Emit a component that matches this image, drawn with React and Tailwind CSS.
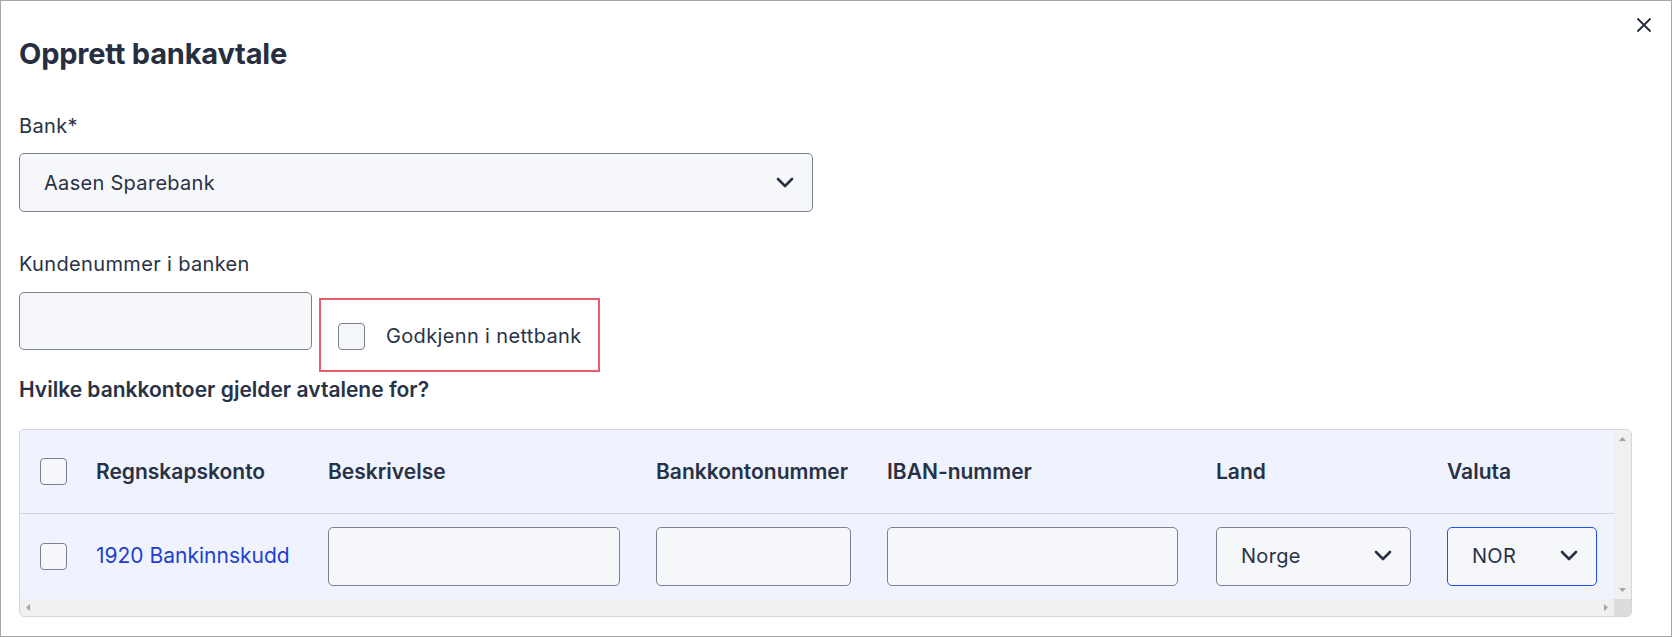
import React from 'react';

const Chevron = () => (
  <svg width="18" height="12" viewBox="0 0 18 12" fill="none" className="shrink-0">
    <path d="M2 2 L9 9 L16 2" stroke="#273142" strokeWidth="2.6" strokeLinecap="round" strokeLinejoin="round" />
  </svg>
);

const Box = () => (
  <div className="w-[27px] h-[27px] rounded-[4px] border border-[#7b8190] bg-[#f6f7fb] shrink-0" />
);

const Field = ({ w, focus }) => (
  <div className={`h-[59px] rounded-[5px] border bg-[#f6f7fb] ${focus ? 'border-[#2152f0]' : 'border-[#7b8190]'} ${w}`} />
);

const SelectBox = ({ value, w, focus }) => (
  <div className={`h-[59px] rounded-[5px] border bg-[#f6f7fb] flex items-center justify-between pl-[24px] pr-[18px] ${focus ? 'border-[#2152f0]' : 'border-[#7b8190]'} ${w}`}>
    <span className="text-[20px] leading-[24px] tracking-[0.3px]">{value}</span>
    <Chevron />
  </div>
);

const Arrow = ({ dir }) => {
  const d = {
    up: 'M0 4 L3.5 0 L7 4 Z',
    down: 'M0 0 L3.5 4 L7 0 Z',
    left: 'M4 0 L0 3.5 L4 7 Z',
    right: 'M0 0 L4 3.5 L0 7 Z',
  }[dir];
  const vert = dir === 'up' || dir === 'down';
  return (
    <svg width={vert ? 7 : 4} height={vert ? 4 : 7} viewBox={vert ? '0 0 7 4' : '0 0 4 7'}>
      <path d={d} fill="#a3a3a3" />
    </svg>
  );
};

const columns = [
  { key: 'check', w: 'w-[56px]' },
  { key: 'konto', w: 'w-[232px]', label: 'Regnskapskonto' },
  { key: 'beskr', w: 'w-[328px]', label: 'Beskrivelse' },
  { key: 'bankkonto', w: 'w-[231px]', label: 'Bankkontonummer' },
  { key: 'iban', w: 'w-[329px]', label: 'IBAN-nummer' },
  { key: 'land', w: 'w-[231px]', label: 'Land' },
  { key: 'valuta', w: 'w-[160px]', label: 'Valuta' },
];

export default function App() {
  return (
    <div className="relative w-[1672px] h-[637px] overflow-hidden border border-[#a6a6a6] bg-white pl-[18px] pt-[35px] font-[Inter,'Noto_Sans',sans-serif] text-[#283246]">
      <button className="absolute right-[18px] top-[15px] p-[1px]" title="Lukk">
        <svg width="16" height="16" viewBox="0 0 16 16" fill="none">
          <path d="M2 2 L14 14 M14 2 L2 14" stroke="#273142" strokeWidth="1.9" strokeLinecap="round" />
        </svg>
      </button>

      <h1 className="text-[29px] leading-[36px] font-bold text-[#262e3f] tracking-[-0.2px]">Opprett bankavtale</h1>

      <div className="mt-[42px] text-[20px] leading-[24px] tracking-[0.35px]">Bank*</div>
      <div className="mt-[15px]">
        <SelectBox value="Aasen Sparebank" w="w-[794px]" />
      </div>

      <div className="mt-[40px] text-[20px] leading-[24px] tracking-[0.35px]">Kundenummer i banken</div>
      <div className="mt-[16px] flex items-start">
        <div className="w-[293px] h-[58px] rounded-[5px] border border-[#7b8190] bg-[#f6f7fb]" />
        <div className="ml-[7px] mt-[6px] w-[281px] h-[74px] border-2 border-[#e85d6c] flex items-center pl-[17px] pt-[2px]">
          <Box />
          <span className="ml-[21px] text-[20px] leading-[24px] tracking-[0.35px] whitespace-nowrap">Godkjenn i nettbank</span>
        </div>
      </div>

      <div className="mt-[6px] text-[21px] leading-[24px] font-semibold">Hvilke bankkontoer gjelder avtalene for?</div>

      <div className="mt-[27px] w-[1613px] h-[188px] rounded-[5px] border border-[#d3d6de] bg-[#f0f3fd] overflow-hidden flex flex-col">
        <div className="flex flex-1 min-h-0">
          <div className="flex-1 min-w-0 overflow-hidden flex flex-col">
            <div className="h-[84px] shrink-0 border-b border-[#d3d6de] flex items-center pl-[20px]">
              {columns.map((c) => (
                <div key={c.key} className={`${c.w} shrink-0 flex items-center`}>
                  {c.key === 'check' ? <Box /> : (
                    <span className="text-[21px] leading-[24px] font-semibold whitespace-nowrap">{c.label}</span>
                  )}
                </div>
              ))}
            </div>
            <div className="h-[84px] shrink-0 flex items-center pl-[20px]">
              <div className="w-[56px] shrink-0"><Box /></div>
              <div className="w-[232px] shrink-0 text-[21px] leading-[24px] text-[#1d3fd0] whitespace-nowrap">1920 Bankinnskudd</div>
              <div className="w-[328px] shrink-0"><Field w="w-[292px]" /></div>
              <div className="w-[231px] shrink-0"><Field w="w-[195px]" /></div>
              <div className="w-[329px] shrink-0"><Field w="w-[291px]" /></div>
              <div className="w-[231px] shrink-0"><SelectBox value="Norge" w="w-[195px]" /></div>
              <div className="w-[160px] shrink-0"><SelectBox value="NOR" w="w-[150px]" focus /></div>
            </div>
          </div>
          <div className="w-[17px] shrink-0 bg-[#f0f0f0] flex flex-col items-center justify-between pt-[7px] pb-[7px]">
            <Arrow dir="up" />
            <Arrow dir="down" />
          </div>
        </div>
        <div className="h-[17px] shrink-0 flex">
          <div className="flex-1 bg-[#f0f0f0] flex items-center justify-between pl-[6px] pr-[6px]">
            <Arrow dir="left" />
            <Arrow dir="right" />
          </div>
          <div className="w-[17px] bg-[#dcdcdc]" />
        </div>
      </div>
    </div>
  );
}
